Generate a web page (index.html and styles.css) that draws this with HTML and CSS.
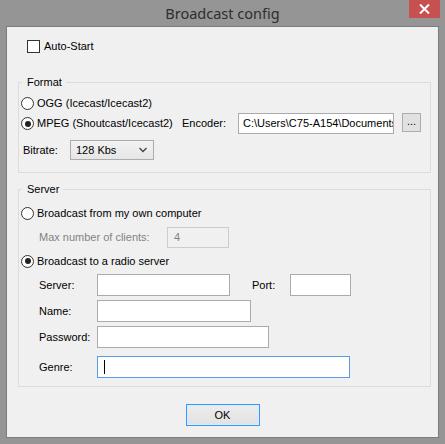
FILE: index.html
```html
<!DOCTYPE html>
<html>
<head>
<meta charset="utf-8">
<link rel="stylesheet" href="styles.css">
</head>
<body>
<div class="window">
  <div class="titlebar">
    <div></div>
    <div class="title">Broadcast config</div>
    <div class="close"><svg width="11" height="10" viewBox="0 0 11 10"><path d="M1 0.5 L10 9.5 M10 0.5 L1 9.5" stroke="#fff" stroke-width="2"/></svg></div>
  </div>
  <div class="client">
    <div class="autostart">
      <span class="checkbox"></span>
      <span class="lbl">Auto-Start</span>
    </div>

    <div class="group format">
      <span class="legend">Format</span>
      <div class="row r-ogg">
        <span class="radio"></span><span class="lbl">OGG (Icecast/Icecast2)</span>
      </div>
      <div class="row r-mpeg">
        <div class="radiobox"><span class="radio on"></span><span class="lbl">MPEG (Shoutcast/Icecast2)</span></div>
        <span class="lbl enc-lbl">Encoder:</span>
        <div class="input enc-input">C:\Users\C75-A154\Documents</div>
        <div class="browse"><span>...</span></div>
      </div>
      <div class="row r-bitrate">
        <span class="lbl bit-lbl">Bitrate:</span>
        <div class="select"><span>128 Kbs</span><svg width="8" height="6" viewBox="0 0 8 6"><path d="M0.5 1 L4 4.5 L7.5 1" fill="none" stroke="#444" stroke-width="1.3"/></svg></div>
      </div>
    </div>

    <div class="group server">
      <span class="legend">Server</span>
      <div class="row r-own">
        <span class="radio"></span><span class="lbl">Broadcast from my own computer</span>
      </div>
      <div class="row r-max">
        <span class="lbl dis max-lbl">Max number of clients:</span>
        <div class="input disabled max-input">4</div>
      </div>
      <div class="row r-radio">
        <span class="radio on"></span><span class="lbl">Broadcast to a radio server</span>
      </div>
      <div class="row field r-server">
        <span class="lbl flbl">Server:</span>
        <div class="input w-server"></div>
        <span class="lbl port-lbl">Port:</span>
        <div class="input w-port"></div>
      </div>
      <div class="row field r-name">
        <span class="lbl flbl">Name:</span>
        <div class="input w-name"></div>
      </div>
      <div class="row field r-pass">
        <span class="lbl flbl">Password:</span>
        <div class="input w-pass"></div>
      </div>
      <div class="row field r-genre">
        <span class="lbl flbl">Genre:</span>
        <div class="input focus w-genre"><span class="caret"></span></div>
      </div>
    </div>

    <div class="buttons">
      <div class="ok">OK</div>
    </div>
  </div>
</div>
</body>
</html>
```

FILE: styles.css
```css
html, body {
  margin: 0;
  padding: 0;
}
body {
  width: 445px;
  height: 444px;
  background: #959595;
  font-family: "Liberation Sans", Arial, sans-serif;
  font-size: 11px;
  color: #000;
  overflow: hidden;
}
.window {
  display: flex;
  flex-direction: column;
  width: 445px;
  height: 444px;
}
.titlebar {
  height: 26px;
  display: grid;
  grid-template-columns: 1fr auto 1fr;
}
.title {
  font-family: "Noto Sans", "Open Sans", sans-serif;
  font-size: 14.5px;
  color: #2e2e2e;
  line-height: 26px;
}
.close {
  justify-self: end;
  align-self: start;
  width: 31px;
  height: 18px;
  margin-right: 5px;
  background: #c75050;
  display: flex;
  align-items: center;
  justify-content: center;
}
.client {
  margin: 0 6px 6px 6px;
  border: 1px solid #7d7d7d;
  background: #f0f0f0;
  flex: 1;
  display: flex;
  flex-direction: column;
}
.autostart {
  display: flex;
  align-items: center;
  margin-top: 13px;
  padding-left: 20px;
  height: 13px;
}
.checkbox {
  width: 11px;
  height: 11px;
  border: 1px solid #333;
  background: #fff;
  margin-right: 4px;
}
.lbl {
  white-space: nowrap;
  line-height: 13px;
}
.group {
  position: relative;
  margin-left: 11px;
  width: 409px;
  border: 1px solid #dcdcdc;
}
.legend {
  position: absolute;
  top: -7px;
  left: 3px;
  padding: 0 4px 0 5px;
  background: #f0f0f0;
  line-height: 13px;
}
.format {
  margin-top: 29px;
  padding: 13px 0 12px 2px;
}
.row {
  display: flex;
  align-items: center;
}
.r-ogg { height: 14px; }
.r-mpeg { height: 21px; margin-top: 3px; }
.r-bitrate { height: 20px; margin-top: 6px; }
.radio {
  width: 11px;
  height: 11px;
  border: 1px solid #333;
  border-radius: 50%;
  background: #fff;
  margin-right: 3px;
  position: relative;
  flex: none;
}
.radio.on::after {
  content: "";
  position: absolute;
  left: 2.5px;
  top: 2.5px;
  width: 6px;
  height: 6px;
  border-radius: 50%;
  background: #222;
}
.radiobox {
  display: flex;
  align-items: center;
  width: 161px;
}
.enc-lbl { width: 56px; }
.input {
  box-sizing: border-box;
  height: 22px;
  border: 1px solid #ababab;
  background: #fff;
  padding: 0 0 0 5px;
  line-height: 20px;
  overflow: hidden;
  white-space: nowrap;
}
.enc-input {
  width: 156px;
  height: 21px;
  line-height: 19px;
  padding-left: 4px;
}
.browse {
  box-sizing: border-box;
  width: 19px;
  height: 19px;
  margin-left: 8px;
  align-self: flex-start;
  border: 1px solid #adadad;
  background: #e1e1e1;
  display: flex;
  justify-content: center;
}
.browse span {
  line-height: 14px;
}
.bit-lbl {
  width: 47px;
  padding-left: 2px;
}
.select {
  box-sizing: border-box;
  width: 84px;
  height: 20px;
  border: 1px solid #acacac;
  background: linear-gradient(#f2f2f2, #e6e6e6);
  display: flex;
  align-items: center;
  justify-content: space-between;
  padding: 0 6px 0 5px;
}
.server {
  margin-top: 16px;
  padding: 16px 0 8px 2px;
}
.r-own { height: 14px; }
.r-max { height: 21px; margin-top: 7px; }
.r-radio { height: 14px; margin-top: 6px; }
.field { height: 22px; }
.r-server { margin-top: 6px; }
.r-name { margin-top: 4px; }
.r-pass { margin-top: 4px; }
.r-genre { margin-top: 8px; }
.dis { color: #838383; }
.max-lbl {
  width: 128px;
  padding-left: 18px;
}
.disabled {
  height: 21px;
  width: 62px;
  border-color: #cccccc;
  background: #f0f0f0;
  color: #838383;
  padding-left: 6px;
  line-height: 19px;
}
.flbl {
  width: 58px;
  padding-left: 18px;
}
.w-server { width: 133px; }
.port-lbl {
  width: 38px;
  padding-left: 22px;
}
.w-port { width: 61px; }
.w-name { width: 154px; }
.w-pass { width: 172px; }
.w-genre { width: 253px; }
.focus {
  border-color: #569de5;
  display: flex;
  align-items: center;
  padding-left: 6px;
}
.caret {
  width: 1px;
  height: 14px;
  background: #000;
}
.buttons {
  display: flex;
  justify-content: center;
  margin-top: 17px;
}
.ok {
  box-sizing: border-box;
  width: 74px;
  height: 22px;
  border: 1px solid #3399ff;
  box-shadow: inset 0 0 0 1px #dcecfc;
  background: linear-gradient(#ececec, #e2e2e2);
  text-align: center;
  line-height: 20px;
}
```
